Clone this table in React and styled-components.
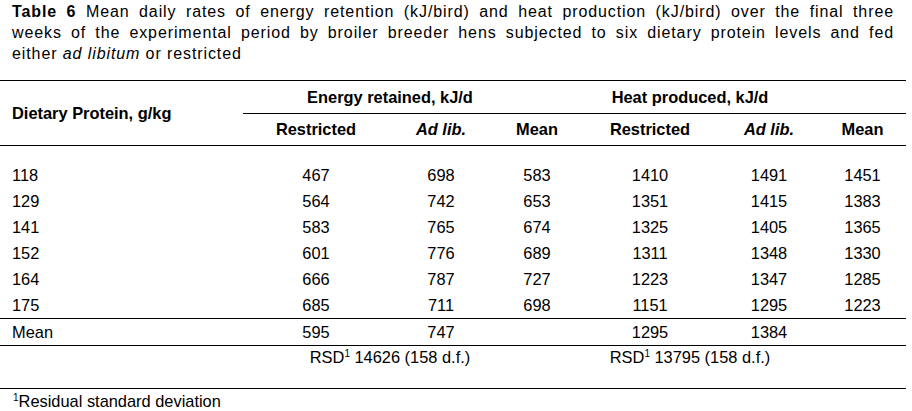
import React from "react";
import styled, { createGlobalStyle } from "styled-components";

const Global = createGlobalStyle`
  html, body { margin: 0; padding: 0; background: #fff; }
  body { font-family: "Liberation Sans", Arial, sans-serif; color: #000; }
`;

const Page = styled.div`
  width: 912px;
  height: 411px;
  overflow: hidden;
`;

const Caption = styled.div`
  margin: 1px 18px 16px 12px;
  font-size: 16px;
  line-height: 21px;
  letter-spacing: 0.9px;
`;

const CaptionLine = styled.div`
  text-align: ${(p) => (p.$justify ? "justify" : "left")};
  text-align-last: ${(p) => (p.$justify ? "justify" : "left")};
  white-space: ${(p) => (p.$justify ? "normal" : "nowrap")};
`;

const Table = styled.div`
  width: 906px;
  display: grid;
  grid-template-columns: 243px 146px 104px 44px 44px 138px 100px 24px 63px;
  font-size: 16.4px;
`;

const Rule = styled.div`
  grid-column: 1 / -1;
  height: 1px;
  background: #000;
`;

const Spacer = styled.div`
  grid-column: 1 / -1;
  height: ${(p) => p.$h}px;
`;

const StubHead = styled.div`
  grid-column: 1;
  grid-row: span 2;
  display: flex;
  align-items: center;
  padding-left: 12px;
  font-weight: bold;
`;

const GroupHead = styled.div`
  grid-column: span ${(p) => p.$span};
  height: 32px;
  line-height: 32px;
  text-align: center;
  font-weight: bold;
  border-bottom: 1px solid #000;
  white-space: nowrap;
`;

const SubHead = styled.div`
  grid-column: span ${(p) => p.$span || 1};
  height: 31px;
  line-height: 31px;
  text-align: center;
  font-weight: bold;
  font-style: ${(p) => (p.$italic ? "italic" : "normal")};
  white-space: nowrap;
`;

const Stub = styled.div`
  grid-column: 1;
  height: ${(p) => p.$h}px;
  line-height: ${(p) => p.$h}px;
  padding-left: 12px;
`;

const Cell = styled.div`
  grid-column: span ${(p) => p.$span || 1};
  height: ${(p) => p.$h}px;
  line-height: ${(p) => p.$h}px;
  text-align: center;
  white-space: nowrap;
`;

const Sup = styled.sup`
  font-size: 10px;
  line-height: 0;
  vertical-align: 6px;
`;

const Footnote = styled.div`
  margin: 2px 0 0 13px;
  font-size: 16.4px;
  line-height: 21px;
`;

const rows = [
  ["118", "467", "698", "583", "1410", "1491", "1451"],
  ["129", "564", "742", "653", "1351", "1415", "1383"],
  ["141", "583", "765", "674", "1325", "1405", "1365"],
  ["152", "601", "776", "689", "1311", "1348", "1330"],
  ["164", "666", "787", "727", "1223", "1347", "1285"],
  ["175", "685", "711", "698", "1151", "1295", "1223"],
];

function DataRow({ r, h }) {
  return (
    <>
      <Stub $h={h}>{r[0]}</Stub>
      <Cell $h={h}>{r[1]}</Cell>
      <Cell $h={h}>{r[2]}</Cell>
      <Cell $h={h} $span={2}>{r[3]}</Cell>
      <Cell $h={h}>{r[4]}</Cell>
      <Cell $h={h}>{r[5]}</Cell>
      <Cell $h={h} $span={2}>{r[6]}</Cell>
    </>
  );
}

export default function App() {
  return (
    <Page>
      <Global />
      <Caption>
        <CaptionLine $justify>
          <b>Table 6</b> Mean daily rates of energy retention (kJ/bird) and heat production (kJ/bird) over the final three
        </CaptionLine>
        <CaptionLine $justify>
          weeks of the experimental period by broiler breeder hens subjected to six dietary protein levels and fed
        </CaptionLine>
        <CaptionLine>
          either <i>ad libitum</i> or restricted
        </CaptionLine>
      </Caption>
      <Table>
        <Rule />
        <StubHead>Dietary Protein, g/kg</StubHead>
        <GroupHead $span={3}>Energy retained, kJ/d</GroupHead>
        <GroupHead $span={4}>Heat produced, kJ/d</GroupHead>
        <GroupHead $span={1} />
        <SubHead>Restricted</SubHead>
        <SubHead $italic>Ad lib.</SubHead>
        <SubHead $span={2}>Mean</SubHead>
        <SubHead>Restricted</SubHead>
        <SubHead $italic>Ad lib.</SubHead>
        <SubHead $span={2}>Mean</SubHead>
        <Rule />
        <Spacer $h={16} />
        {rows.map((r) => (
          <DataRow key={r[0]} r={r} h={26} />
        ))}
        <Rule />
        <DataRow r={["Mean", "595", "747", "", "1295", "1384", ""]} h={26} />
        <Rule />
        <Cell $h={23} />
        <Cell $h={23} $span={3}>
          RSD<Sup>1</Sup> 14626 (158 d.f.)
        </Cell>
        <Cell $h={23} $span={4}>
          RSD<Sup>1</Sup> 13795 (158 d.f.)
        </Cell>
        <Cell $h={23} />
        <Spacer $h={19} />
        <Rule />
      </Table>
      <Footnote>
        <Sup>1</Sup>Residual standard deviation
      </Footnote>
    </Page>
  );
}
